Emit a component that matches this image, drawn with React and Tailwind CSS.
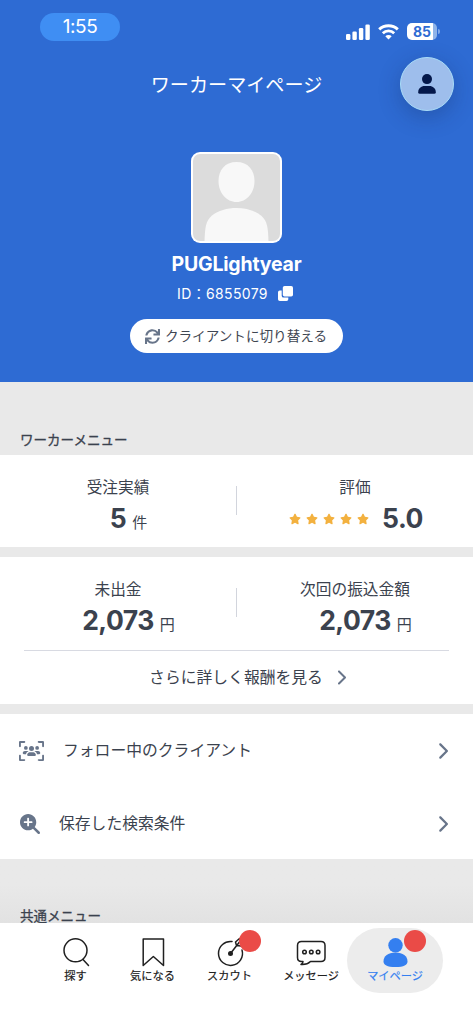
import React from "react";
import { FaSync } from "react-icons/fa";
import {
  FaChevronRight,
  FaMagnifyingGlassPlus,
  FaStar,
  FaUsersViewfinder,
} from "react-icons/fa6";

function StatusBar() {
  return (
    <div className="flex h-[54px] items-start justify-between pt-[13px] pr-[33px] pl-[40px]">
      <div className="flex h-7 w-20 items-center justify-center rounded-full bg-[#3f8ef3] text-[19px] tracking-[-0.4px]">
        1:55
      </div>
      <div className="flex items-center gap-[8px] pt-[10px]">
        <svg className="h-4 w-6" viewBox="0 0 24 16" fill="white">
          <rect x="0" y="10" width="4.4" height="6" rx="1.3" />
          <rect x="6.4" y="7.5" width="4.4" height="8.5" rx="1.3" />
          <rect x="12.9" y="4" width="4.4" height="12" rx="1.3" />
          <rect x="19.4" y="0.5" width="4.4" height="15.5" rx="1.3" />
        </svg>
        <svg className="h-4 w-[21px]" viewBox="0 0 21 16" fill="none" stroke="white">
          <path d="M1.2 5.4C6.3.6 14.7.6 19.8 5.4" strokeWidth="3" />
          <path d="M4.8 9.2C8 6.2 13 6.2 16.2 9.2" strokeWidth="2.8" />
          <path d="M10.5 15.5L7.3 12.2C9 10.6 12 10.6 13.7 12.2Z" fill="white" stroke="none" />
        </svg>
        <div className="flex items-center gap-px">
          <div className="flex h-[17px] w-[30px] items-center justify-center rounded-[5px] bg-[linear-gradient(90deg,white_86%,#8fb4e9_86%)] text-[14px] font-bold text-[#2e6bd3]">
            85
          </div>
          <div className="h-[5px] w-[2px] rounded-r-full bg-[#81a8e5]" />
        </div>
      </div>
    </div>
  );
}

function Header() {
  return (
    <header className="flex h-[382px] shrink-0 flex-col bg-[#2e6bd3] text-white">
      <StatusBar />
      <div className="grid h-[60px] grid-cols-[1fr_auto_1fr] items-center pr-[19px]">
        <span />
        <h1 className="pt-[3px] pl-[19px] text-[19.1px] leading-none">ワーカーマイページ</h1>
        <button className="flex h-[54px] w-[54px] items-center justify-center justify-self-end rounded-full border border-[#a9dcf8] bg-[#9ebeec] shadow-[0_6px_22px_rgba(20,40,90,0.3)]">
          <svg className="h-5 w-[18px]" viewBox="0 0 18 20" fill="#04184a">
            <circle cx="9" cy="5.1" r="5" />
            <path d="M0.2 18.2C0.2 14.4 3.3 12.1 6.5 12.1H11.5C14.7 12.1 17.8 14.4 17.8 18.2Q17.8 19.8 16.3 19.8H1.7Q.2 19.8 .2 18.2Z" />
          </svg>
        </button>
      </div>
      <div className="mt-[38px] flex flex-col items-center">
        <svg className="h-[91px] w-[91px] rounded-[9px]" viewBox="0 0 91 91">
          <rect width="91" height="91" fill="#fff" />
          <rect x="2" y="2" width="87" height="87" rx="7" fill="#dcdcdc" />
          <path d="M45.5 10C57 10 63.5 18 63.5 29C63.5 41 55.5 50 45.5 50S27.5 41 27.5 29C27.5 18 34 10 45.5 10Z" fill="#f8f8f8" />
          <path d="M13.5 89C14 76 14.5 69 21 63.5C33 53.5 58 53.5 70 63.5C76.500 69 77 76 77.5 89Z" fill="#f8f8f8" />
        </svg>
        <div className="mt-[9px] text-[19.5px] leading-6 font-bold tracking-[-0.2px]">PUGLightyear</div>
        <div className="mt-[7px] flex h-5 items-center gap-[10px] pr-[3px] text-[14px] tracking-[0.35px]">
          <span>ID：6855079</span>
          <svg className="size-[15px]" viewBox="0 0 15 15" fill="white">
            <rect x="4.800" y="0" width="10.200" height="10.500" rx="1.800" />
            <path d="M3.700 4.500V9.700Q3.700 11.600 5.600 11.600H10.300V13.200Q10.300 15 8.500 15H1.800Q0 15 0 13.200V6.300Q0 4.500 1.800 4.500Z" />
          </svg>
        </div>
        <button className="mt-[16px] flex h-[34px] w-[213px] items-center justify-center gap-[5px] rounded-full bg-white pt-px pr-px text-[13.6px] whitespace-nowrap text-[#3f4652]">
          <FaSync className="size-[15px] text-[#68758a]" />
          クライアントに切り替える
        </button>
      </div>
    </header>
  );
}

function Stat({ label, value, unit, stars, className }) {
  return (
    <div className="flex flex-1 flex-col items-center">
      <div className="text-[15.7px] leading-[22px]">{label}</div>
      <div className={className}>
        {stars && (
          <span className="flex gap-[5px] self-center pr-[13px] text-[#f3b13f]">
            {[0, 1, 2, 3, 4].map((i) => (
              <FaStar key={i} className="size-3" />
            ))}
          </span>
        )}
        <span className="text-[26.5px] font-bold tracking-[-0.5px]">{value}</span>
        {unit && <span className="text-[15px]">{unit}</span>}
      </div>
    </div>
  );
}

function Divider() {
  return <div className="mt-[9px] h-[29px] w-px bg-[#d2d5dd]" />;
}

function MenuRow({ icon, label, className }) {
  return (
    <div className={className}>
      {icon}
      <span className="flex-1">{label}</span>
      <FaChevronRight className="h-[18px] w-[11px] text-[#68758a]" />
    </div>
  );
}

function Tab({ icon, label, badge, active, wide }) {
  return (
    <div
      className={
        active
          ? "relative flex h-[65px] w-[96px] flex-col items-center rounded-full bg-[#ececec] pt-[9px] text-[#347ff0]"
          : wide
            ? "-mr-[7px] flex h-[65px] w-[86px] flex-col items-center pt-[9px] text-[#202020]"
            : "relative flex h-[65px] w-[77px] flex-col items-center pt-[9px] text-[#202020]"
      }
    >
      {icon}
      <span className="mt-px text-[11.2px] leading-4 whitespace-nowrap [-webkit-text-stroke:0.2px_currentColor]">{label}</span>
      {badge && (
        <span
          className={
            active
              ? "absolute top-[2px] left-[57px] size-[22px] rounded-full bg-[#ea4b47]"
              : "absolute top-[2px] left-[48px] size-[22px] rounded-full bg-[#ea4b47]"
          }
        />
      )}
    </div>
  );
}

const iconClass = "h-[30px] w-[30px] shrink-0";

function TabBar() {
  return (
    <nav className="flex h-[101px] shrink-0 items-start bg-white pt-[5px] pl-[37px]">
      <Tab
        label="探す"
        icon={
          <svg className={iconClass} viewBox="0 0 30 30" fill="none" stroke="currentColor" strokeWidth="1.5" strokeLinecap="round">
            <circle cx="14.5" cy="13.3" r="11.5" />
            <path d="M22 22.5L27.5 28.5" />
          </svg>
        }
      />
      <Tab
        label="気になる"
        icon={
          <svg className={iconClass} viewBox="0 0 30 30" fill="none" stroke="currentColor" strokeWidth="1.5" strokeLinejoin="round">
            <path d="M5.200 2H25.500V28.500L15.350 19.500L5.200 28.500Z" />
          </svg>
        }
      />
      <Tab
        label="スカウト"
        badge
        icon={
          <svg className={iconClass} viewBox="0 0 30 30" fill="none" stroke="currentColor" strokeWidth="1.5" strokeLinecap="round" strokeLinejoin="round">
            <path d="M17 4.500A12 12 0 1 0 27 13" />
            <circle cx="15.5" cy="16.5" r="2.5" fill="currentColor" stroke="none" />
            <path d="M15.500 16.500L26 3M21.500 8.500L20.500 5L24.500 1.500L25.500 5L29 5.500L26 9Z" />
          </svg>
        }
      />
      <Tab
        label="メッセージ"
        wide
        icon={
          <svg className={iconClass} viewBox="0 0 30 30" fill="none" stroke="currentColor" strokeWidth="1.5" strokeLinejoin="round">
            <path d="M5.500 4.500H25Q29 4.500 29 8.500V20.500Q29 24.500 25 24.500H14.500Q11 28 5 27.500Q7 26.500 7 24.500H5.500Q1.500 24.500 1.500 20.500V8.500Q1.500 4.500 5.500 4.500Z" />
            <circle cx="8.5" cy="15" r="1.8" />
            <circle cx="15.3" cy="15" r="1.8" />
            <circle cx="22.1" cy="15" r="1.8" />
          </svg>
        }
      />
      <Tab
        label="マイページ"
        badge
        active
        icon={
          <svg className={iconClass} viewBox="0 0 30 30" fill="currentColor">
            <circle cx="15.5" cy="8.3" r="7.2" />
            <path d="M3.500 24.500C3.500 19 8 15.500 15.500 15.500S27.500 19 27.500 24.500C27.500 28 24 30 15.500 30S3.500 28 3.500 24.500Z" />
          </svg>
        }
      />
    </nav>
  );
}

export default function App() {
  return (
    <div className="flex h-[1024px] w-[473px] flex-col overflow-hidden bg-[#e9e9e9] font-[Inter,'Noto_Sans_CJK_JP',sans-serif] text-[#3b424e]">
      <Header />
      <main className="flex h-[541px] shrink-0 flex-col overflow-hidden">
        <h2 className="h-[73px] shrink-0 pt-[48px] pl-[20px] text-[13.5px] leading-5 [-webkit-text-stroke:0.3px_currentColor]">
          ワーカーメニュー
        </h2>
        <section className="flex h-[92px] shrink-0 bg-white pt-[22px]">
          <Stat label="受注実績" value="5" unit="件" className="flex h-10 items-baseline gap-[6px] pl-[21px]" />
          <Divider />
          <Stat label="評価" value="5.0" stars className="flex h-10 items-baseline pl-[2px]" />
        </section>
        <section className="mt-[10px] h-[147px] shrink-0 bg-white pt-[22px]">
          <div className="flex h-[71px]">
            <Stat label="未出金" value="2,073" unit="円" className="flex h-10 items-baseline gap-[6px] pl-[21px]" />
            <Divider />
            <Stat label="次回の振込金額" value="2,073" unit="円" className="flex h-10 items-baseline gap-[6px] pl-[21px]" />
          </div>
          <div className="mx-6 flex h-[54px] items-center justify-center gap-[13px] border-t border-[#d8dae2] pl-[22px] text-[15.8px]">
            <span>さらに詳しく報酬を見る</span>
            <FaChevronRight className="h-[17px] w-[10px] text-[#68758a]" />
          </div>
        </section>
        <section className="mt-[10px] flex h-[145px] shrink-0 flex-col bg-white text-[15.8px]">
          <MenuRow
            label="フォロー中のクライアント"
            className="flex h-[73px] shrink-0 items-center gap-[19px] pr-[25px] pl-[19px]"
            icon={<FaUsersViewfinder className="h-5 w-[25px] text-[#68758a]" />}
          />
          <MenuRow
            label="保存した検索条件"
            className="flex h-[73px] shrink-0 items-center gap-[19px] pr-[25px] pl-[20px]"
            icon={<FaMagnifyingGlassPlus className="size-5 text-[#68758a]" />}
          />
        </section>
        <h2 className="h-16 shrink-0 bg-gradient-to-b from-[#e9e9e9] from-40% to-[#e2e2e2] pt-[47px] pl-[20px] text-[13.5px] leading-5 [-webkit-text-stroke:0.3px_currentColor]">
          共通メニュー
        </h2>
      </main>
      <TabBar />
    </div>
  );
}
